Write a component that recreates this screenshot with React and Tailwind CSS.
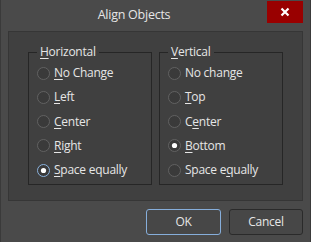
import { useState } from "react";

const font = { fontFamily: '"Segoe UI", "Open Sans", "Noto Sans", sans-serif' };

function Accel({ text, at }) {
  return (
    <>
      {text.slice(0, at)}
      <span className="underline underline-offset-2">{text[at]}</span>
      {text.slice(at + 1)}
    </>
  );
}

function Radio({ label, at, checked, focused, onClick }) {
  return (
    <button type="button" onClick={onClick} className="flex h-[24.25px] items-center gap-[4px] pl-[8px] text-left whitespace-nowrap">
      <svg width="13" height="13" viewBox="0 0 13 13" className="shrink-0">
        <circle cx="6.5" cy="6.5" r="6" fill="#3a3a3a" stroke={focused ? "#8ab2dd" : "#626262"} strokeWidth="1" />
        {checked && <circle cx="6.5" cy="6.5" r="2.6" fill="#ffffff" />}
      </svg>
      <span>
        <Accel text={label} at={at} />
      </span>
    </button>
  );
}

function Group({ title, at, items, value, setValue, focused }) {
  return (
    <fieldset className="h-[141px] w-[124px] border border-[#262626] pt-[1px]">
      <legend className="ml-[8px] px-[3px] leading-4">
        <Accel text={title} at={at} />
      </legend>
      <div className="flex flex-col">
        {items.map(([label, a], i) => (
          <Radio
            key={label}
            label={label}
            at={a}
            checked={value === i}
            focused={focused && value === i}
            onClick={() => setValue(i)}
          />
        ))}
      </div>
    </fieldset>
  );
}

export default function App() {
  const [h, setH] = useState(4);
  const [v, setV] = useState(3);

  return (
    <div
      className="flex h-[242px] w-[311px] flex-col border-x border-[#3a3a3a] bg-[#4a4a4a] text-[12px] tracking-[-0.25px] text-[#e6e6e6]"
      style={font}
    >
      {/* Title bar */}
      <div className="flex h-[31px] items-start pr-[7px] pt-[1px]">
        <span className="flex-1 pt-[5px] text-center text-[12.5px]">Align Objects</span>
        <button className="flex h-[22px] w-[36px] items-center justify-center bg-[#990000]">
          <svg width="10" height="10" viewBox="0 0 10 10">
            <path d="M1.5 1.5 L8.5 8.5 M8.5 1.5 L1.5 8.5" stroke="white" strokeWidth="2.2" />
          </svg>
        </button>
      </div>

      {/* Body panel */}
      <div className="mx-[7px] flex h-[170px] gap-[7px] border border-[#363636] bg-[#404040] pl-[19px] pt-[12px]">
        <Group
          title="Horizontal"
          at={0}
          items={[["No Change", 0], ["Left", 0], ["Center", 0], ["Right", 0], ["Space equally", 0]]}
          value={h}
          setValue={setH}
          focused
        />
        <Group
          title="Vertical"
          at={0}
          items={[["No change", 7], ["Top", 0], ["Center", 1], ["Bottom", 0], ["Space equally", 7]]}
          value={v}
          setValue={setV}
        />
      </div>

      {/* Buttons */}
      <div className="flex justify-end gap-[8px] pr-[7px] pt-[8px]">
        <button className="h-[26px] w-[75px] rounded-[3px] border border-[#86aedb] bg-[#474747]">OK</button>
        <button className="h-[26px] w-[74px] rounded-[3px] border border-[#2a2a2a] bg-[#474747]">Cancel</button>
      </div>
    </div>
  );
}
